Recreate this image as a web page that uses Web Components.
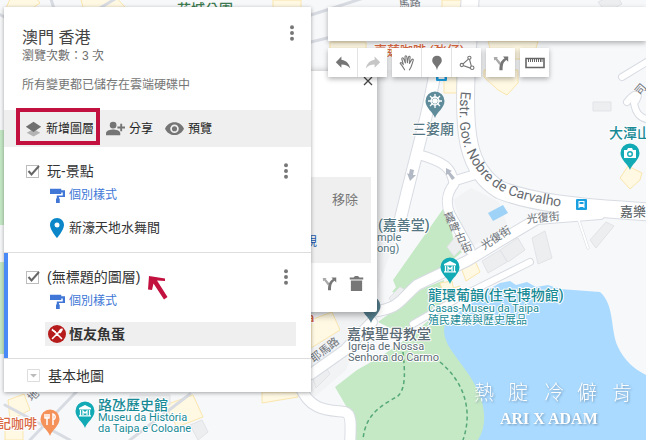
<!DOCTYPE html>
<html lang="zh-Hant">
<head>
<meta charset="utf-8">
<title>澳門 香港</title>
<style>
html, body { margin: 0; height: 100%; }
body { font-family: "Liberation Sans", "Noto Sans CJK TC", sans-serif; overflow: hidden; color: #333; }
</style>
</head>
<body>
<my-map-app></my-map-app>
<script>
const define = (name, html, setup) => {
  const tpl = document.createElement('template');
  tpl.innerHTML = html;
  customElements.define(name, class extends HTMLElement {
    connectedCallback() {
      if (this.shadowRoot) return;
      const root = this.attachShadow({ mode: 'open' });
      root.append(tpl.content.cloneNode(true));
      if (setup) setup(this, root);
    }
  });
};

const ICONS = {
  layers: '<path d="M10 10.5 18 15l-8 4.500L2 15z" fill="#b4b4b4"/><path d="M10 2 19 8 10 14 1 8z" fill="#6f6f6f"/>',
  share: '<circle cx="7.500" cy="6.500" r="3.500"/><path d="M0 17v-2c0-3 5-4 7.500-4s7.500 1 7.500 4v2z"/><path d="M15 5h2v3h3v2h-3v3h-2v-3h-3V8h3z"/>',
  eye: '<path fill-rule="evenodd" d="M10 3.500C5.500 3.500 1.800 6.200 0 10.200c1.800 4 5.500 6.700 10 6.700s8.200-2.700 10-6.700C18.200 6.200 14.500 3.500 10 3.500zm0 11.200a4.500 4.500 0 1 1 0-9 4.500 4.500 0 0 1 0 9zm0-7.200a2.700 2.700 0 1 0 0 5.400 2.700 2.700 0 0 0 0-5.400z"/>',
  more: '<circle cx="10" cy="3.500" r="2.200"/><circle cx="10" cy="10" r="2.200"/><circle cx="10" cy="16.500" r="2.200"/>',
  roller: '<path d="M0 1h15v7H0zM15 3h5v9h-8v2h1v6H8v-6h1v-4h8V6h-2z"/>',
  pin: '<path fill-rule="evenodd" d="M10 0C6 0 3 3 3 7c0 5 7 13 7 13s7-8 7-13c0-4-3-7-7-7zm0 4.500a2.500 2.500 0 1 1 0 5 2.500 2.500 0 0 1 0-5z"/>',
  food: '<circle cx="10" cy="10" r="10" fill="#b71c1c"/><g stroke="#fff" stroke-width="1.800" stroke-linecap="round"><path d="M5 15 12.500 7.500M15 15 7 7"/></g><path fill="#fff" d="M4.500 4 9 7.500 8 9 4 6zM12 8c-.5-2 1.500-4 3.500-4s.5 3-1 4.500-2 .5-2.500-.5z"/>',
  undo: '<path d="M8 6V2L1 9l7 7v-4.200c5 0 8.500 1.500 11 5.200C18 12 15 7 8 6z"/>',
  redo: '<path d="M12 6V2l7 7-7 7v-4.200c-5 0-8.500 1.500-11 5.200C2 12 5 7 12 6z"/>',
  hand: '<path fill="none" stroke="#777" stroke-width="1.400" stroke-linejoin="round" stroke-linecap="round" d="M7 18.500C5 15 3.500 12.500 1.500 10.500c0-2 2.500-1 4 1.500L3.500 5c0-2 2-2 2.500 0l2 5L7.500 2.500c0-2 2-2 2.300 0l.7 7 1.300-6.500c.5-2 2.500-1.500 2 .5L13 10.500l2.800-4.500c1-1.500 2.700-.5 1.900 1C16.500 10 16 15 13 18.500"/>',
  marker: '<path d="M10 1C6.500 1 4 3.500 4 7c0 4 5 6 6 12 1-6 6-8 6-12 0-3.500-2.500-6-6-6z"/>',
  line: '<g fill="#fff" stroke="#777" stroke-width="1.400"><path fill="none" d="M13 4 3.500 12.500 16 17M13 5l3 11"/><circle cx="13" cy="3.500" r="2"/><circle cx="3.500" cy="12.500" r="2"/><circle cx="16.500" cy="16" r="2.200"/></g>',
  route: '<path fill="#aaa" d="M1 2.500h5L5 4l5 6-2 2.500-5-6.500L1.500 7z"/><path d="M12.500 2H19v6.500l-2.300-2.300C13 9 12 11 12 19H8c0-8 1.500-11.500 6.500-15z"/>',
  ruler: '<path fill="none" stroke="#666" stroke-width="1.600" d="M1 5.500h18v9H1z"/><path stroke="#666" stroke-width="1" d="M3.500 6v3M5.500 6v3M7.500 6v3M9.500 6v3M11.500 6v3M13.500 6v3M15.500 6v3M17 6v3"/>',
  trash: '<path d="M2.500 6h15v14h-15zM1 2h5l2-2h4l2 2h5v2.500H1z"/>',
  close: '<path fill="none" stroke="#444" stroke-width="2.500" d="m2 2 16 16M18 2 2 18"/>',
  pencil: '<path d="M1 1h18v18H1z"/>'
};

define('ui-icon', `<style>
:host { display: inline-block; flex: none; width: var(--w, 16px); height: var(--h, 16px); }
svg { display: block; width: 100%; height: 100%; fill: currentColor; }
</style><svg viewBox="0 0 20 20" aria-hidden="true"></svg>`, (el, root) => {
  root.querySelector('svg').innerHTML = ICONS[el.getAttribute('name')];
});

define('more-button', `<style>
:host { display: block; }
button { display: grid; place-items: center; width: 20px; height: 20px; padding: 0; border: 0; background: none; color: #777; }
ui-icon { --w: 18px; --h: 18px; }
</style><button type="button" aria-label="更多選項"><ui-icon name="more"></ui-icon></button>`);

define('panel-action', `<style>
:host { display: block; position: relative; }
button { display: flex; align-items: center; gap: 4px; padding: 0; border: 0; background: none; font: 12px/16px "Liberation Sans", "Noto Sans CJK TC", sans-serif; color: #222; white-space: nowrap; }
ui-icon { --w: 19px; --h: 19px; color: #757575; }
:host([marked]) ui-icon { --w: 17px; --h: 17px; }
:host([marked])::after { content: ""; position: absolute; inset: -12px -6px -8px -9px; border: 4px solid #c2103f; pointer-events: none; }
</style><button type="button"><slot name="icon"></slot><slot></slot></button>`, (el, root) => {
  const icon = document.createElement('ui-icon');
  icon.setAttribute('name', el.getAttribute('icon'));
  root.querySelector('slot[name=icon]').replaceWith(icon);
});

define('place-item', `<style>
:host { display: block; }
button { display: grid; grid-template-columns: 24px 1fr; align-items: center; width: 100%; height: 24px; padding: 0; border: 0; background: none; text-align: left; font: 13px/20px "Liberation Sans", "Noto Sans CJK TC", sans-serif; color: #333; }
:host([selected]) button { background: #efefef; font-size: 14px; font-weight: bold; }
.i { display: grid; place-items: center; }
</style><button type="button"><span class="i"><slot name="icon"></slot></span><span><slot></slot></span></button>`);

define('map-layer', `<style>
:host { display: block; border-bottom: 1px solid #ddd; }
section { padding: 14px 15px 12px 18px; border-left: 4px solid transparent; }
:host([active]) section { border-left-color: #4a8af7; }
.head { display: flex; align-items: center; height: 20px; margin-bottom: 4px; }
label { flex: 1; display: flex; align-items: center; gap: 8px; font-size: 14px; line-height: 20px; color: #333; }
.box { display: grid; width: 13px; height: 13px; }
.box > * { grid-area: 1 / 1; }
input { appearance: none; box-sizing: border-box; margin: 0; width: 13px; height: 13px; border: 1px solid #bdbdbd; background: #fff; }
.box svg { width: 13px; height: 13px; overflow: visible; pointer-events: none; }
.style { display: grid; grid-template-columns: 24px auto; align-items: center; justify-content: start; height: 20px; margin: 0 0 11px 19px; padding: 0; border: 0; background: none; color: #4077d6; font: 12px/20px "Liberation Sans", "Noto Sans CJK TC", sans-serif; }
.style ui-icon { --w: 15px; --h: 15px; justify-self: center; }
.items { margin-left: 19px; }
</style>
<section>
<div class="head"><label><span class="box"><input type="checkbox" checked><svg viewBox="0 0 13 13"><path fill="none" stroke="#666" stroke-width="2" d="M2.500 6 5.500 9.500 13 1"/></svg></span><slot name="title"></slot></label><more-button></more-button></div>
<button class="style" type="button"><ui-icon name="roller"></ui-icon>個別樣式</button>
<div class="items"><slot></slot></div>
</section>`);

define('side-panel', `<style>
:host { display: block; position: relative; background: #fff; box-shadow: 0 1px 4px rgba(0,0,0,.35); }
header { display: flex; justify-content: space-between; align-items: flex-start; padding: 20px 9px 18px 18px; }
h1 { margin: 0; font-size: 16px; line-height: 22px; font-weight: normal; color: #444; }
p { margin: 0; font-size: 12px; line-height: 14px; color: #6f6f6f; }
p + p { margin-top: 15px; color: #757575; }
header more-button { margin-top: -4px; }
nav { display: flex; align-items: center; gap: 12px; height: 37px; padding-left: 21px; background: #efefef; }
place-item ui-icon { --w: 20px; --h: 20px; color: #0b87c9; }
place-item[selected] ui-icon { --w: 18px; --h: 18px; }
.base { display: flex; align-items: center; gap: 8px; width: 100%; height: 33px; padding: 0 0 0 23px; border: 0; background: none; font: 14px/20px "Liberation Sans", "Noto Sans CJK TC", sans-serif; color: #333; }
.base svg { width: 13px; height: 13px; }
.arrow { position: absolute; left: 143px; top: 268px; width: 22px; height: 26px; }
</style>
<header><div><h1>澳門 香港</h1><p>瀏覽次數：3 次</p><p>所有變更都已儲存在雲端硬碟中</p></div><more-button></more-button></header>
<nav aria-label="地圖操作">
<panel-action icon="layers" marked>新增圖層</panel-action>
<panel-action icon="share">分享</panel-action>
<panel-action icon="eye">預覽</panel-action>
</nav>
<map-layer><span slot="title">玩-景點</span><place-item><ui-icon slot="icon" name="pin"></ui-icon>新濠天地水舞間</place-item></map-layer>
<map-layer active><span slot="title">(無標題的圖層)</span><place-item selected><ui-icon slot="icon" name="food"></ui-icon>恆友魚蛋</place-item></map-layer>
<button class="base" type="button"><svg viewBox="0 0 13 13"><path fill="#fff" stroke="#ddd" d="M.5.5h12v12H.5z"/><path fill="#bbb" d="M3 5h7L6.500 8.500z"/></svg>基本地圖</button>
<svg class="arrow" viewBox="0 0 22 26"><path fill="#c2103f" d="M2 1 18 3.500V6L10 5.500 20.500 22 17 24.500 6.500 8.500 5 15 1 14.500z"/></svg>`);

define('info-window', `<style>
:host { display: flex; flex-direction: column; background: #fff; border-radius: 2px; box-shadow: 0 2px 8px rgba(0,0,0,.4); color: #777; }
button { display: grid; place-items: center; padding: 0; border: 0; background: none; color: #777; font: 13px/18px "Liberation Sans", "Noto Sans CJK TC", sans-serif; }
.close { align-self: flex-end; width: 18px; height: 20px; margin-bottom: 86px; }
.close ui-icon { --w: 10px; --h: 10px; }
.card { display: flex; flex-direction: column; justify-content: space-between; height: 86px; box-sizing: border-box; margin-right: 6px; padding: 14px 13px 12px; background: #efefef; }
.card button { align-self: flex-end; }
a { align-self: flex-end; margin-right: 41px; font-size: 12px; line-height: 18px; color: #1a55a8; text-decoration: none; }
footer { display: flex; align-items: center; justify-content: flex-end; gap: 12px; height: 49px; padding: 0 13px 8px 0; box-sizing: border-box; }
footer ui-icon { --w: 15px; --h: 15px; }
</style>
<button class="close" type="button" aria-label="關閉"><ui-icon name="close"></ui-icon></button>
<div class="card"><button type="button">移除</button><a href="#">檢視</a></div>
<footer><button type="button" aria-label="編輯"><ui-icon name="pencil"></ui-icon></button><button type="button" aria-label="路線"><ui-icon name="route"></ui-icon></button><button type="button" aria-label="刪除"><ui-icon name="trash"></ui-icon></button></footer>`);

define('tool-group', `<style>
:host { display: flex; background: #fff; box-shadow: 0 2px 5px rgba(0,0,0,.3); }
::slotted(button) { display: grid; place-items: center; box-sizing: content-box; width: 29px; height: 29px; padding: 0; border: 0; background: #fff; color: #757575; }
::slotted(button:not(:first-child)) { border-left: 1px solid #e3e3e3; }
::slotted(button:disabled) { color: #c6c6c6; }
</style><slot></slot>`);

define('map-tools', `<style>
:host { display: flex; flex-direction: column; gap: 7px; }
input { box-sizing: border-box; width: 100%; height: 34px; padding: 0 10px; border: 0; border-radius: 0; outline: 0; background: #fff; box-shadow: 0 2px 5px rgba(0,0,0,.3); font: 14px "Liberation Sans", "Noto Sans CJK TC", sans-serif; }
.tools { display: flex; gap: 5px; }
ui-icon { --w: 16px; --h: 16px; }
.wide { --w: 20px; --h: 20px; }
</style>
<input type="search" aria-label="搜尋地圖">
<div class="tools">
<tool-group><button type="button" aria-label="復原"><ui-icon name="undo"></ui-icon></button><button type="button" aria-label="重做" disabled><ui-icon name="redo"></ui-icon></button></tool-group>
<tool-group><button type="button" aria-label="選取"><ui-icon name="hand"></ui-icon></button><button type="button" aria-label="新增標記"><ui-icon name="marker"></ui-icon></button><button type="button" aria-label="繪製線條"><ui-icon name="line"></ui-icon></button></tool-group>
<tool-group><button type="button" aria-label="新增路線"><ui-icon name="route"></ui-icon></button></tool-group>
<tool-group><button type="button" aria-label="測量"><ui-icon class="wide" name="ruler"></ui-icon></button></tool-group>
</div>`);

const PIN = 'M0 17C-2 11-9.500 7-9.500 0A9.500 9.500 0 1 1 9.500 0C9.500 7 2 11 0 17z';
const MUSEUM = '<path fill="#fff" d="M0-6 6-3v1.500H-6V-3z"/><path fill="none" stroke="#fff" stroke-width="1.300" d="M-4.500-1V4.500M4.500-1V4.500M-6 4.800H6M-2 4V0L0 2 2 0V4"/>';

define('map-canvas', `<style>
:host { display: block; overflow: hidden; background: #f7f8fa; }
svg { display: block; width: 100%; height: 100%; font-family: Roboto, "Noto Sans CJK TC", sans-serif; }
.l { stroke: #fff; stroke-width: 2px; paint-order: stroke; stroke-linejoin: round; }
.b { font-size: 14px; font-weight: 500; }
.s { font-size: 11px; }
.st { font-size: 11px; fill: #6d7278; }
.teal { fill: #178a96; } .slate { fill: #557783; } .or { fill: #d9673f; font-size: 13px; font-weight: 500; }
.bl { fill: #eceef0; stroke: #e1e3e6; } .y { fill: #fff8e2; stroke: #fae6ad; }
.wm { fill: #fff; filter: drop-shadow(1px 1px 1px rgba(80,110,140,.6)); }
</style>
<svg viewBox="0 0 646 440" preserveAspectRatio="xMinYMin slice" role="img" aria-label="地圖">
<path fill="#f1f3f5" d="M370 70h60l-28 150-32 90zM453 200l18-12 28 14 8 22-37 24zM311 300h60l-25 70-35 30z"/>
<path fill="#c5e8c5" d="M0 130h6v95H0zM0 262h6v92H0zM335 387 357 370 380 357 412 335 440 310 450 330 490 390 485 440H353v-22zM393 280 443 209 450 225 455 245 462 252 450 262 415 283 398 292zM378 322 397 308 422 289 444 280 440 305 400 333zM392 292 406 275 406 296z"/>
<path fill="#aadaff" d="M445 325C460 310 470 304 482 293L500 283 510 281 516 285 527 282 536 287 548 285 560 289 600 292C615 305 610 330 618 347 624 360 634 369 646 375V440H478C487 425 485 410 480 396 473 376 458 362 448 345 444 336 443 330 445 325z"/>
<g class="y">
<path d="M12-5 32-8 40 3 24 14 6 8zM80-4l30-5 15 16-40 8zM273 0h28v12h-28zM330 42h36v16h-36zM442 0h28v12h-28zM488 41h50l-5 18h-40zM444 76h13v17h-13zM484 77 498 90 507 95 518 83V70H484zM620 178 628 166 642 173 640 180 630 189zM462 270 475 261 480 272 466 281zM311 320 332 312 340 330 311 348zM440 292l20-6-5 14-15 4z"/>
<path d="M8 400 24 394 30 410 10 420zM262 392h36v5l-36 6zM165 405l28-10 10 22-26 10zM5 425l18-4v19H5zM440 283l12-2 2 10-10 4z"/></g>
<g class="bl"><path d="M593 102h18v9h-18zM590 240 606 222 614 226 596 248zM532 238 545 231 552 258 538 264zM482 261 500 250 507 262 488 273zM500 250 518 238 525 250 508 262zM447 247 456 236 465 245 454 256zM389 298 400 287 410 293 393 304zM312 375 325 366 330 374 316 388zM190 425l12-5 6 12-10 8zM130 395h40v10h-40zM598 2l18-8 6 10-16 8z"/></g>
<path fill="#9fd2f7" d="M488 213 503 205 508 213 493 221z"/>
<g fill="none" stroke-linecap="round" stroke-linejoin="round">
<g stroke="#d8dce2">
<path stroke-width="19" d="M470 0 466 77C464 130 466 170 500 190 530 202 570 207 650 212"/>
<path stroke-width="13" d="M437 60C430 110 418 145 399 225"/>
<path stroke-width="11" d="M417 154C445 162 452 168 454 184 446 194 446 205 450 214L470 250M454 181 480 173"/>
<path stroke-width="12" d="M372 312C400 308 398 302 417 285L467 261 510 235 537 219 600 214"/>
<path stroke-width="8" d="M413 324 460 297 530 262"/>
<path stroke-width="12" d="M300 386C310 412 330 410 345 412 352 414 351 425 350 445M311 374 345 350 372 322"/>
<path stroke-width="8" d="M622 77 650 60M627 102C636 90 642 94 634 103 636 114 640 118 650 120"/>
<path stroke-width="3" d="M-5 12 10 20M50-4 55 12M100 8 120-4M311 15 370-4M311 42 400 20M5 405 70 440M30 440 80 388M130 440 190 394M577 215 588 248"/>
</g>
<g stroke="#fff">
<path stroke-width="17" d="M470 0 466 77C464 130 466 170 500 190 530 202 570 207 650 212"/>
<path stroke-width="11" d="M437 60C430 110 418 145 399 225"/>
<path stroke-width="9" d="M417 154C445 162 452 168 454 184 446 194 446 205 450 214L470 250M454 181 480 173"/>
<path stroke-width="10" d="M372 312C400 308 398 302 417 285L467 261 510 235 537 219 600 214"/>
<path stroke-width="6" d="M413 324 460 297 530 262"/>
<path stroke-width="10" d="M300 386C310 412 330 410 345 412 352 414 351 425 350 445M311 374 345 350 372 322"/>
<path stroke-width="6" d="M622 77 650 60M627 102C636 90 642 94 634 103 636 114 640 118 650 120"/>
<path stroke-width="2" d="M577 215 588 248"/>
</g></g>
<g fill="none" stroke="#55a878" stroke-width="1.500" stroke-dasharray="4 3"><path d="M403 352C405 372 406 388 398 396 385 404 365 412 363 440M440 362C462 380 474 408 463 440"/></g>
<path fill="#b3b9c4" d="M410 169l4 1-1 5h3l-6 6-3-8 2 1zM446 168l6 3-2 1 5 6-3 2-4-6-2 1z"/>
<g fill="#1a9fe0"><rect x="436" y="70" width="11" height="11" rx="1"/><rect x="576" y="199" width="11" height="11" rx="1"/></g>
<path fill="#fff" fill-rule="evenodd" d="M578.500 201h6v7h-1v-1h-4v1h-1zM579.500 202v2h4v-2zM438.500 76h6v3h-6z"/>
<defs><path id="estr" d="M461 91C457 132 462 153 482 176 500 197 530 203 585 210"/></defs>
<text font-size="14" fill="#666b70"><textPath href="#estr">Estr. Gov. Nobre de Carvalho</textPath></text>
<text class="st" transform="translate(484 250) rotate(-33)">光復街</text>
<text class="st" transform="translate(527 223) rotate(-5)">光復街</text>
<g class="st"><text transform="translate(446 223) rotate(-20)">嘉</text><text transform="translate(451 233) rotate(-20)">啤</text><text transform="translate(457 243) rotate(-20)">古</text><text transform="translate(463 253) rotate(-20)">街</text></g>
<text class="st" transform="translate(314 363) rotate(-38)">耶馬路</text>
<text class="st" transform="translate(32 402) rotate(-45)">地</text>
<text class="st" transform="translate(640 96) rotate(-50)">司</text>
<text class="st" transform="translate(399 8) rotate(-6)">馬路</text>
<text fill="#3b7a50" x="177" y="14" class="b">花城公園</text>
<text class="or l" x="374" y="55">嘉蓮咖啡 (氹仔)</text>
<text class="or l" x="-2" y="428">記咖啡</text>
<text class="or l" x="304" y="322">ia</text>
<text class="b l slate" x="412" y="134">三婆廟</text>
<text class="b l slate" x="378" y="230">(嘉善堂)</text>
<text class="s l slate" x="377" y="241">mple</text><text class="s l slate" x="377" y="252">ong)</text>
<text class="b l" fill="#5b6b75" x="347" y="339">嘉模聖母教堂</text>
<text class="s l" fill="#5b6b75" x="348" y="350">Igreja de Nossa</text><text class="s l" fill="#5b6b75" x="348" y="361">Senhora do Carmo</text>
<text class="b l teal" x="428" y="300">龍環葡韻(住宅博物館)</text>
<text class="s l teal" x="428" y="312">Casas-Museu da Taipa</text><text class="s l teal" x="428" y="324">殖民建築與歷史展品</text>
<text class="b l teal" x="98" y="410">路氹歷史館</text>
<text class="s l teal" x="98" y="421">Museu da História</text><text class="s l teal" x="98" y="432">da Taipa e Coloane</text>
<text class="b l teal" x="609" y="138">大潭山</text>
<text x="620" y="216" font-size="13" fill="#555b60">嘉樂</text>
<g transform="translate(371 306)"><path fill="#557f8e" d="${PIN}"/></g>
<g transform="translate(435 101)"><path fill="#5f8c9a" d="${PIN}"/><g fill="none" stroke="#fff" stroke-width="1.300"><circle r="4"/><circle r="1.200"/><path d="M0-7V7M-7 0H7M-5-5 5 5M5-5-5 5"/></g></g>
<g transform="translate(450 267)"><path fill="#12aab5" d="${PIN}"/>${MUSEUM}</g>
<g transform="translate(85 411)"><path fill="#12aab5" d="${PIN}"/>${MUSEUM}</g>
<g transform="translate(630 153)"><path fill="#12aab5" d="${PIN}"/><path fill="#fff" fill-rule="evenodd" d="M-6-3h3l1-2h4l1 2h3v8H-6zM0-2a3 3 0 1 0 0 6 3 3 0 0 0 0-6z"/><circle cy="1" r="1.600" fill="#fff"/></g>
<g transform="translate(50 419)"><path fill="#f5925a" d="${PIN}"/><path fill="none" stroke="#fff" stroke-width="1.500" d="M-3-5V6M-5-5v4h4v-4M3 6V-5c3 1 3 5 0 6"/></g>
<text class="wm" y="400" font-size="20" font-weight="300" x="474 508 544 577 612">熱腚冷僻肯</text>
<text class="wm" x="500" y="424" font-size="16" font-weight="700" font-family="Liberation Serif, serif">ARI X ADAM</text>
</svg>`);

define('my-map-app', `<style>
:host { display: grid; grid-template-columns: 307px minmax(0, 1fr); column-gap: 17px; align-items: start; position: relative; min-height: 100vh; padding: 7px 0 0 4px; box-sizing: border-box; }
map-canvas { position: absolute; inset: 0; }
info-window { position: absolute; left: 200px; top: 71px; width: 177px; }
side-panel, map-tools { position: relative; z-index: 1; }
</style>
<map-canvas></map-canvas><info-window></info-window>
<side-panel></side-panel><map-tools></map-tools>`);
</script>
</body>
</html>
